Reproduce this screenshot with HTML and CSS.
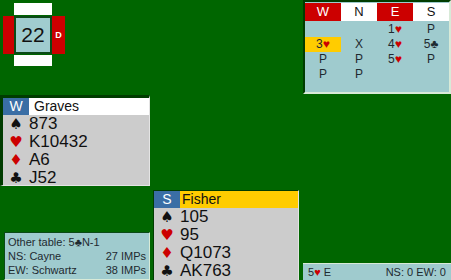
FILE: index.html
```html
<!DOCTYPE html>
<html lang="en">
<head>
  <meta charset="UTF-8">
  <meta name="viewport" content="width=device-width, initial-scale=1.0">
  <title>Bridge Table</title>
  <link rel="stylesheet" href="styles.css">
</head>
<body>
  <div class="table">
    <div class="board">
      <div class="side top"></div>
      <div class="vul left"></div>
      <div class="number">22</div>
      <div class="vul right">D</div>
      <div class="side bottom"></div>
    </div>

    <div class="auction">
      <div class="seats">
        <span class="red">W</span>
        <span>N</span>
        <span class="red">E</span>
        <span>S</span>
      </div>
      <div class="bids">
        <span></span><span></span><span>1<i class="h">♥</i></span><span>P</span>
        <span class="last">3<i class="h">♥</i></span><span>X</span><span>4<i class="h">♥</i></span><span>5<i>♣</i></span>
        <span>P</span><span>P</span><span>5<i class="h">♥</i></span><span>P</span>
        <span>P</span><span>P</span>
      </div>
    </div>

    <div class="hand west">
      <div class="head"><span class="seat">W</span><span class="name">Graves</span></div>
      <div class="suit"><span class="sym">♠</span>873</div>
      <div class="suit"><span class="sym h">♥</span>K10432</div>
      <div class="suit"><span class="sym h">♦</span>A6</div>
      <div class="suit"><span class="sym">♣</span>J52</div>
    </div>

    <div class="hand south">
      <div class="head"><span class="seat">S</span><span class="name turn">Fisher</span></div>
      <div class="suit"><span class="sym">♠</span>105</div>
      <div class="suit"><span class="sym h">♥</span>95</div>
      <div class="suit"><span class="sym h">♦</span>Q1073</div>
      <div class="suit"><span class="sym">♣</span>AK763</div>
    </div>

    <div class="other">
      <div>Other table: 5<i>♣</i>N-1</div>
      <div class="line"><span>NS: Cayne</span><span>27 IMPs</span></div>
      <div class="line"><span>EW: Schwartz</span><span>38 IMPs</span></div>
    </div>

    <div class="status">
      <span>5<i class="h">♥</i> E</span>
      <span>NS: 0 EW: 0</span>
    </div>
  </div>
</body>
</html>
```

FILE: styles.css
```css
body {
  margin: 0;
  background: #006600;
  font-family: 'Liberation Sans', Arial, sans-serif;
  color: #1e2a30;
}
i {
  font-style: normal;
}
.h {
  color: #cc0000;
}
.table {
  display: grid;
  grid-template-columns: 152px 151px 148px;
  grid-template-rows: 95px 95px 90px;
  width: 451px;
  height: 280px;
  overflow: hidden;
}

/* board number with vulnerability bars */
.board {
  grid-area: 1 / 1;
  align-self: start;
  justify-self: start;
  margin: 3px 0 0 3px;
  display: grid;
  grid-template-columns: 11px 38px 13px;
  grid-template-rows: 12px 38px 11px;
  row-gap: 1px;
}
.side {
  background: white;
}
.top {
  grid-area: 1 / 2;
}
.bottom {
  grid-area: 3 / 2;
}
.vul {
  background: #cc0000;
}
.left {
  grid-area: 2 / 1;
}
.right {
  grid-area: 2 / 3;
  color: white;
  font-size: 9px;
  font-weight: bold;
  display: flex;
  align-items: center;
  justify-content: center;
}
.number {
  grid-area: 2 / 2;
  background: #a0cccf;
  border: 2px solid #0b4a17;
  box-sizing: border-box;
  font-size: 21px;
  color: #111;
  display: flex;
  align-items: center;
  justify-content: center;
}

/* bidding */
.auction {
  grid-area: 1 / 3;
  height: 94px;
  box-sizing: border-box;
  background: #9fcbce;
  border: 2px solid #d8ead8;
  border-top-color: #003c00;
  border-left-color: #003c00;
  padding-top: 1px;
}
.seats, .bids {
  display: grid;
  grid-template-columns: repeat(4, 1fr);
  text-align: center;
}
.seats span {
  background: white;
  color: #111;
  font-size: 13px;
  line-height: 18px;
}
.seats .red {
  background: #cc0000;
  color: white;
}
.bids {
  padding-top: 1px;
  font-size: 12px;
  line-height: 15px;
}
.bids .last {
  background: #ffcc00;
}

/* hands */
.hand {
  background: #cccccc;
  box-sizing: border-box;
  border: 2px solid #e4e4e4;
  border-top-color: #003c00;
  border-left-color: #003c00;
  overflow: hidden;
}
.west {
  grid-area: 2 / 1;
  width: 150px;
  height: 91px;
  border-width: 3px 1px 1px 3px;
}
.south {
  grid-area: 3 / 2;
  margin-left: 1px;
  width: 146px;
  height: 92px;
  border-width: 1px 1px 1px 1px;
}
.head {
  display: flex;
  font-size: 14px;
  line-height: 17px;
  height: 17px;
}
.seat {
  width: 26px;
  background: #3a6ea5;
  color: white;
  text-align: center;
}
.name {
  flex: 1;
  background: white;
  color: #111;
  padding-left: 5px;
}
.name.turn {
  background: #ffcc00;
  padding-left: 2px;
}
.suit {
  display: flex;
  align-items: center;
  height: 18px;
  font-size: 17px;
  color: #111;
}
.sym {
  width: 26px;
  text-align: center;
  font-family: 'DejaVu Sans', sans-serif;
  font-size: 15px;
  line-height: 18px;
}

/* result at the other table */
.other {
  grid-area: 3 / 1;
  align-self: end;
  margin-left: 4px;
  width: 146px;
  height: 48px;
  box-sizing: border-box;
  background: #9fcbce;
  border: 1px solid #d8ead8;
  border-top-color: #0b4a17;
  border-left-color: #0b4a17;
  padding: 2px 3px 0 3px;
  font-size: 11px;
  line-height: 14px;
}
.line, .status {
  display: flex;
  justify-content: space-between;
}

.status {
  grid-area: 3 / 3;
  align-self: end;
  height: 17px;
  box-sizing: border-box;
  background: #9fcbce;
  border-top: 1px solid #d8ead8;
  padding: 0 5px;
  font-size: 11px;
  line-height: 16px;
}
```
